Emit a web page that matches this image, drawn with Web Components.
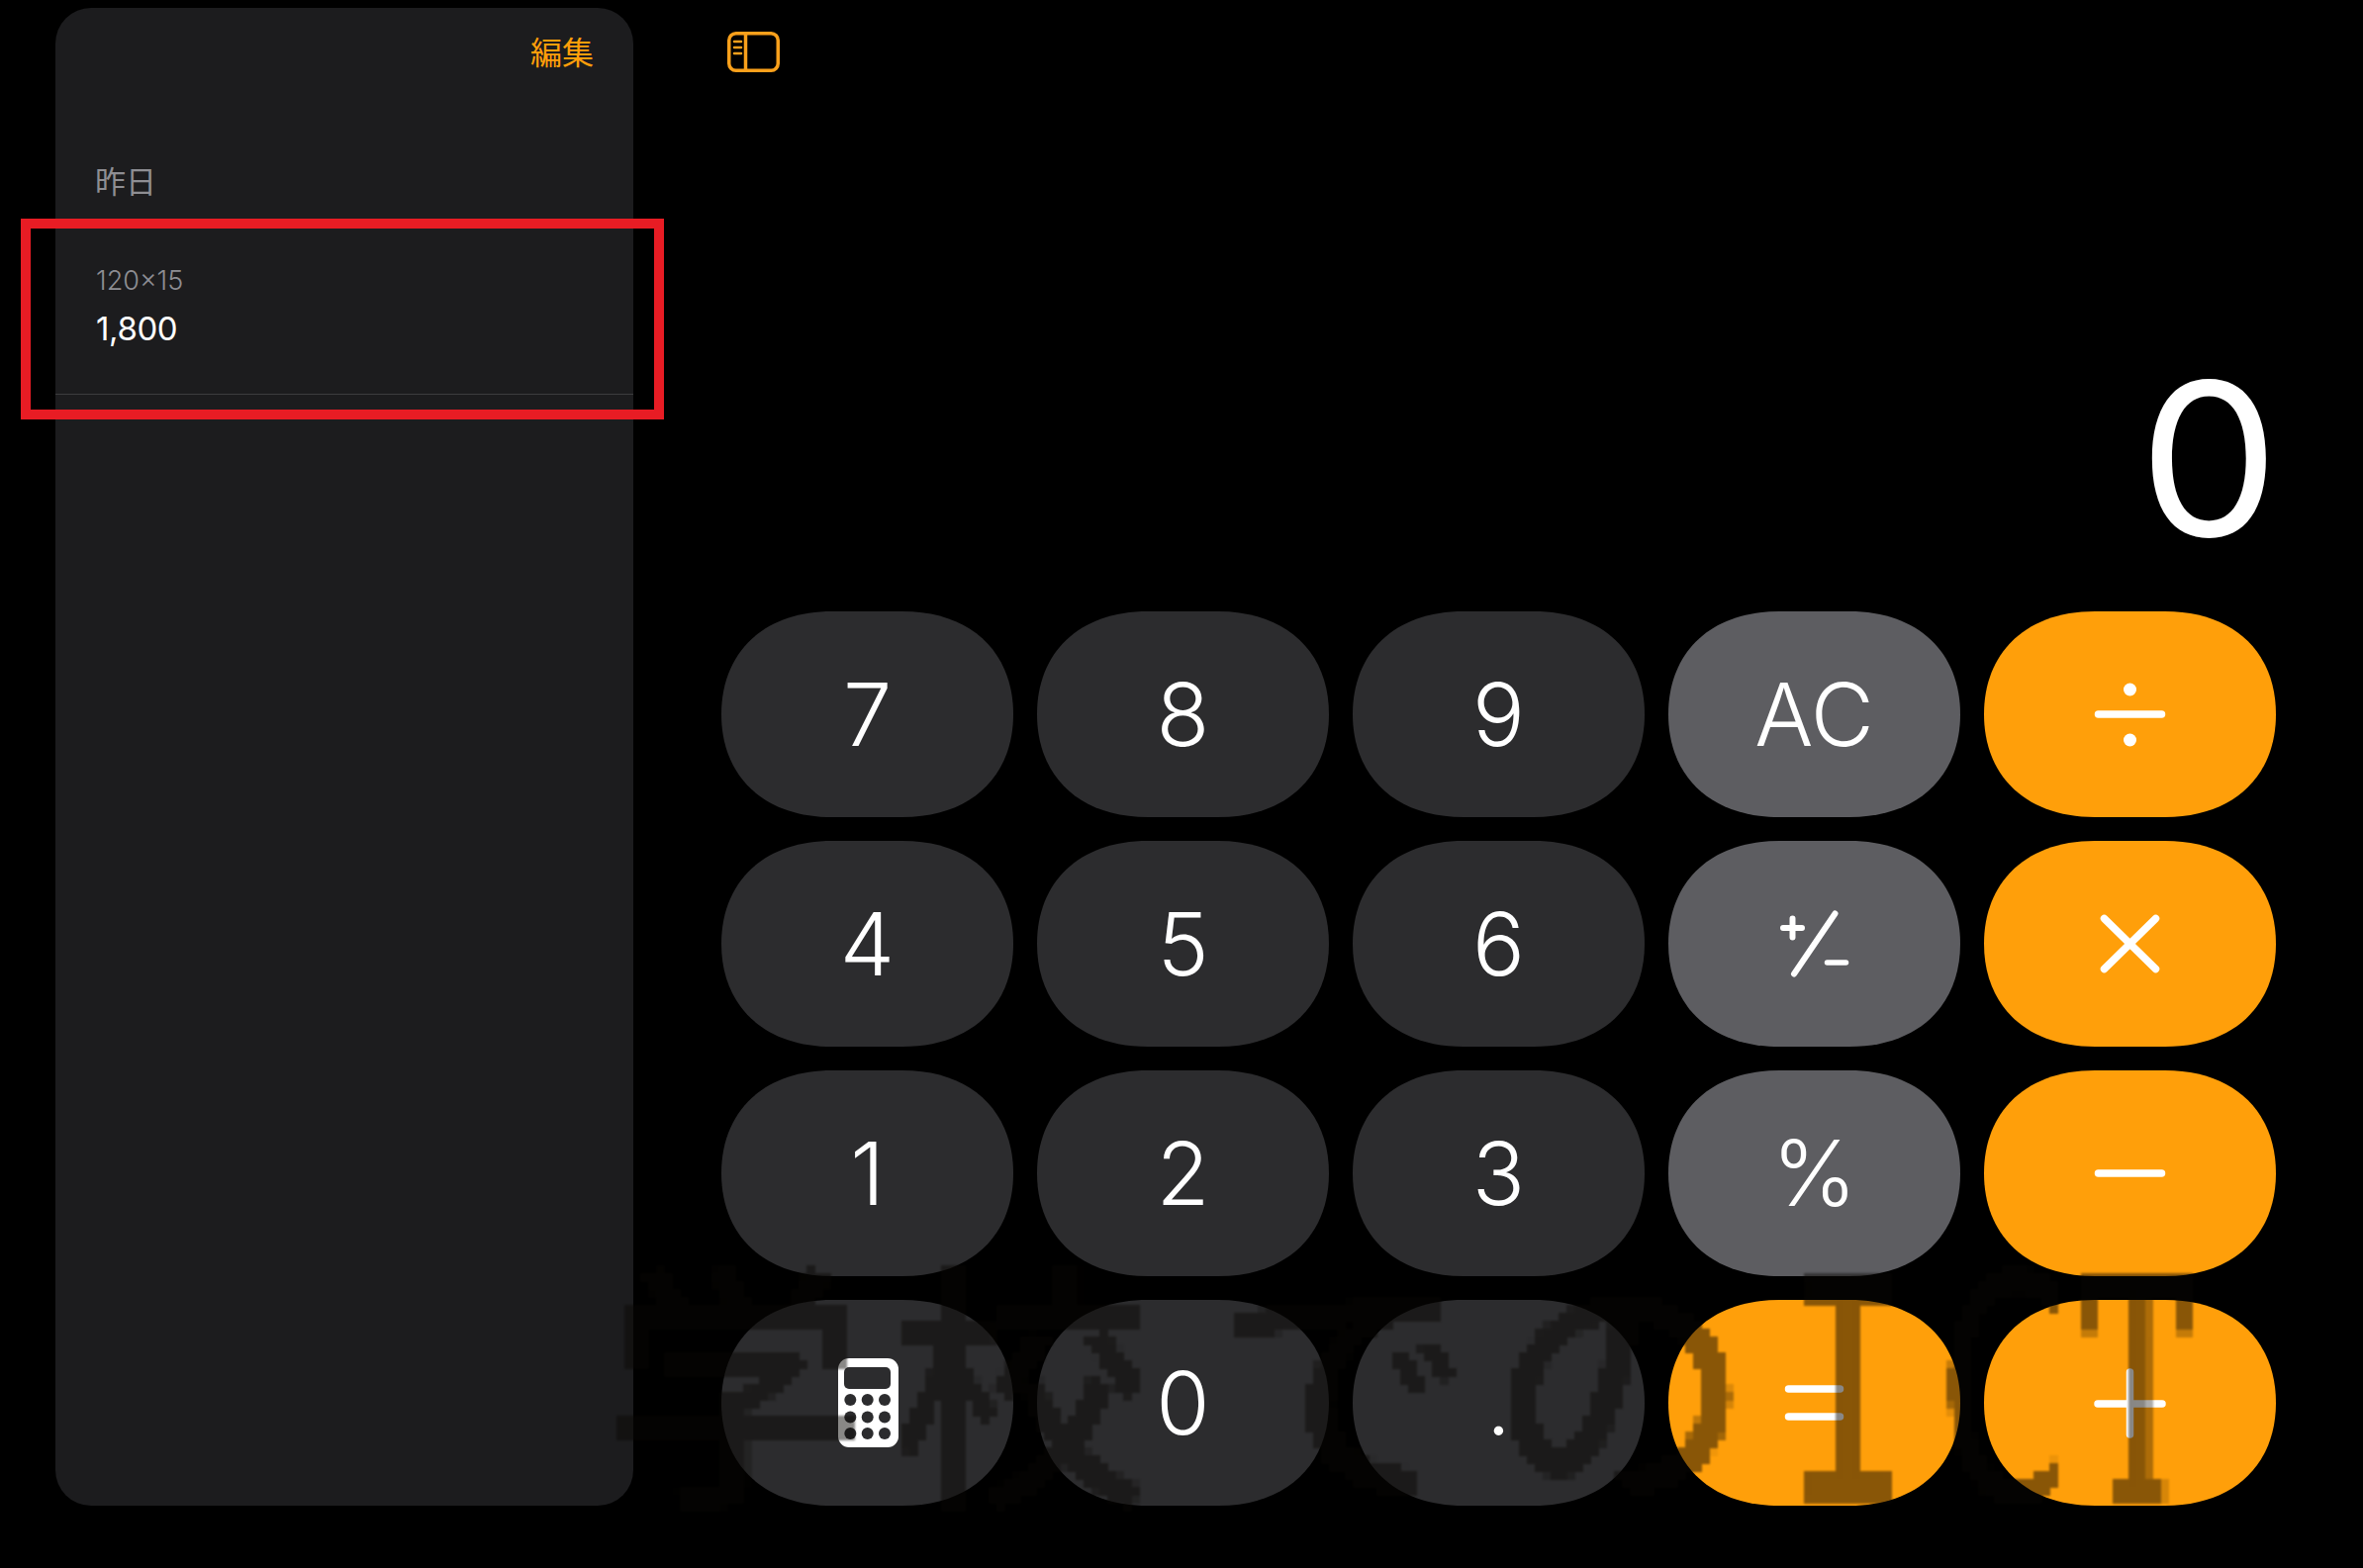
<!DOCTYPE html>
<html lang="ja">
<head>
<meta charset="utf-8">
<title>計算機</title>
<style>
  html, body { margin: 0; background: #000; }
  body { width: 2388px; height: 1585px; overflow: hidden; position: relative; }
</style>
</head>
<body>
<calc-app>
  <history-panel slot="side" edit="編集">
    <history-group label="昨日">
      <history-row expr="120×15" value="1,800"></history-row>
    </history-group>
  </history-panel>
  <sidebar-toggle slot="tool"></sidebar-toggle>
  <calc-display slot="display">0</calc-display>
  <calc-keypad slot="keys">
    <calc-key>7</calc-key><calc-key>8</calc-key><calc-key>9</calc-key>
    <calc-key kind="fn">AC</calc-key><calc-key kind="op" icon="divide"></calc-key>
    <calc-key>4</calc-key><calc-key>5</calc-key><calc-key>6</calc-key>
    <calc-key kind="fn" icon="sign"></calc-key><calc-key kind="op" icon="times"></calc-key>
    <calc-key>1</calc-key><calc-key>2</calc-key><calc-key>3</calc-key>
    <calc-key kind="fn" big>%</calc-key><calc-key kind="op" icon="minus"></calc-key>
    <calc-key icon="calc"></calc-key><calc-key>0</calc-key><calc-key>.</calc-key>
    <calc-key kind="op" icon="equals"></calc-key><calc-key kind="op" icon="plus"></calc-key>
  </calc-keypad>
</calc-app>
<ict-watermark></ict-watermark>

<script>
const appTemplate = document.createElement("template");
appTemplate.innerHTML = `
  <style>
    :host { display: flex; width: 2388px; height: 1585px; box-sizing: border-box; padding: 8px 88px 63px 56px; background: #000; }
    .main { flex: 1; display: flex; flex-direction: column; margin-left: 89px; }
    .tool { height: 75px; display: flex; align-items: flex-start; padding-top: 24px; box-sizing: border-box; }
    .display { flex: 1; display: flex; justify-content: flex-end; align-items: flex-end; }
  </style>
  <slot name="side"></slot>
  <div class="main">
    <div class="tool"><slot name="tool"></slot></div>
    <div class="display"><slot name="display"></slot></div>
    <slot name="keys"></slot>
  </div>
`;

class CalcApp extends HTMLElement {
  constructor() {
    super();
    this.attachShadow({ mode: "open" }).appendChild(appTemplate.content.cloneNode(true));
  }
}

class HistoryPanel extends HTMLElement {
  constructor() {
    super();
    this.attachShadow({ mode: "open" }).innerHTML = `
      <style>
        :host { display: block; width: 584px; height: 1514px; background: #1c1c1e; border-radius: 36px; font-family: Inter, "Noto Sans CJK JP", sans-serif; }
        .head { display: flex; justify-content: flex-end; height: 142px; box-sizing: border-box; padding: 19px 40px 0 0; }
        .edit { color: #ff9f0a; font: 400 32px/48px "Noto Sans CJK JP", sans-serif; }
      </style>
      <div class="head"><span class="edit">${this.getAttribute("edit")}</span></div>
      <slot></slot>
    `;
  }
}

class HistoryGroup extends HTMLElement {
  constructor() {
    super();
    this.attachShadow({ mode: "open" }).innerHTML = `
      <style>
        :host { display: block; }
        .label { color: #8e8e93; font: 400 31px/40px "Noto Sans CJK JP", sans-serif; padding-left: 40px; margin-top: 12px; height: 66px; }
      </style>
      <div class="label">${this.getAttribute("label")}</div>
      <slot></slot>
    `;
  }
}

class HistoryRow extends HTMLElement {
  constructor() {
    super();
    this.attachShadow({ mode: "open" }).innerHTML = `
      <style>
        :host { display: block; position: relative; height: 170px; border-bottom: 1px solid #3c3c3e; }
        .row { padding: 40px 0 0 41px; font-family: Inter, sans-serif; }
        .expr { color: #8e8e93; font-size: 27px; font-weight: 300; line-height: 32px; }
        .value { color: #fff; font-size: 33px; font-weight: 400; line-height: 40px; margin-top: 12px; letter-spacing: -0.4px; }
        /* annotation box, drawn over the row */
        .callout { position: absolute; left: -35px; right: -31px; top: -7px; height: 183px; border: 10px solid #e81c24; pointer-events: none; }
      </style>
      <div class="row">
        <div class="expr">${this.getAttribute("expr")}</div>
        <div class="value">${this.getAttribute("value")}</div>
      </div>
      <div class="callout"></div>
    `;
  }
}

class SidebarToggle extends HTMLElement {
  constructor() {
    super();
    this.attachShadow({ mode: "open" }).innerHTML = `
      <style>:host { display: block; width: 53px; height: 41px; margin-left: 6px; } svg { display: block; }</style>
      <svg width="53" height="41" viewBox="0 0 53 41" fill="none" stroke="#f9a01b" stroke-width="3.5">
        <rect x="1.75" y="1.75" width="49.5" height="37.5" rx="7"/>
        <path d="M18.5 2v37"/>
        <path d="M7 10h7M7 16h7M7 22h7" stroke-width="2.6" stroke-linecap="round"/>
      </svg>
    `;
  }
}

class CalcDisplay extends HTMLElement {
  constructor() {
    super();
    this.attachShadow({ mode: "open" }).innerHTML = `
      <style>
        :host { display: block; color: #fff; font: 400 216px/216px Inter, sans-serif; margin-bottom: 46px; margin-right: -3px; transform: scaleX(1.04); transform-origin: right; }
      </style>
      <slot></slot>
    `;
  }
}

class CalcKeypad extends HTMLElement {
  constructor() {
    super();
    this.attachShadow({ mode: "open" }).innerHTML = `
      <style>
        :host { display: grid; grid-template-columns: repeat(5, 295px); grid-auto-rows: 208px; gap: 24px; }
      </style>
      <slot></slot>
    `;
  }
}

// symbols are drawn in the 295x208 box of a key
const keyIcons = {
  divide: `<path d="M115.5 104h64"/><circle cx="147.5" cy="79" r="6.5" fill="#fff" stroke="none"/><circle cx="147.5" cy="130" r="6.5" fill="#fff" stroke="none"/>`,
  times: `<path d="M121.5 78.5l52 51M173.5 78.5l-52 51"/>`,
  minus: `<path d="M115.5 104h64"/>`,
  equals: `<path d="M121.5 90h52M121.5 118h52"/>`,
  plus: `<path d="M115 105h65M147.5 73v63"/>`,
  sign: `<path d="M116 88h19M125.5 78.5v19M127 134.5l41.5-61" stroke-width="6"/><path d="M160.5 123h19" stroke-width="5.5"/>`,
  calc: `<rect x="118" y="59" width="61" height="90" rx="11" fill="#fff" stroke="none"/>
    <rect x="124" y="68" width="47" height="22" rx="5" fill="#2c2c2e" stroke="none"/>
    <g fill="#2c2c2e" stroke="none">
      <circle cx="130.3" cy="101" r="6"/><circle cx="147.7" cy="101" r="6"/><circle cx="165" cy="101" r="6"/>
      <circle cx="130.3" cy="118.5" r="6"/><circle cx="147.7" cy="118.5" r="6"/><circle cx="165" cy="118.5" r="6"/>
      <circle cx="130.3" cy="135" r="6"/><circle cx="147.7" cy="135" r="6"/><circle cx="165" cy="135" r="6"/>
    </g>`,
};

class CalcKey extends HTMLElement {
  constructor() {
    super();
    const icon = keyIcons[this.getAttribute("icon")];
    this.attachShadow({ mode: "open" }).innerHTML = `
      <style>
        :host { display: flex; align-items: center; justify-content: center; width: 295px; height: 208px; background: #2c2c2e; color: #fff;
          font: 350 88px/1 Inter, sans-serif;
          clip-path: path("M0 104C0 42 42 0 112 0H183C253 0 295 42 295 104S253 208 183 208H112C42 208 0 166 0 104Z"); }
        :host([kind="fn"]) { background: #5d5d61; }
        :host([kind="op"]) { background: #ff9f0a; }
        :host([big]) { font-size: 92px; }
        svg { display: block; }
      </style>
      ${icon ? `<svg width="295" height="208" viewBox="0 0 295 208" fill="none" stroke="#fff" stroke-width="7.5" stroke-linecap="round">${icon}</svg>` : `<slot></slot>`}
    `;
  }
}

class IctWatermark extends HTMLElement {
  constructor() {
    super();
    this.attachShadow({ mode: "open" }).innerHTML = `
      <style>
        :host { display: block; position: absolute; left: 0; top: 0; width: 2388px; height: 1585px; pointer-events: none; }
        .layer { position: absolute; inset: 0; opacity: 0.48; filter: url(#px); color: rgb(10,8,5); }
        span { position: absolute; line-height: 1; transform-origin: 0 0; white-space: nowrap; }
        .ja { font-family: "Noto Sans CJK JP", sans-serif; font-weight: 500; font-size: 265px; top: 1255px; }
        .i { font-family: "DejaVu Sans Mono", monospace; font-size: 305px; left: 1805px; top: 1255px; transform: scaleX(0.68); -webkit-text-stroke: 7px rgb(10,8,5); }
        .c { font-family: "DejaVu Sans", sans-serif; font-size: 317px; left: 1960px; top: 1249px; transform: scaleX(0.6); }
        .t { font-family: "DejaVu Serif", serif; font-size: 305px; left: 2105px; top: 1255px; transform: scaleX(0.55); -webkit-text-stroke: 9px rgb(10,8,5); }
      </style>
      <svg width="0" height="0" style="position:absolute">
        <filter id="px" x="0" y="0" width="100%" height="100%" color-interpolation-filters="sRGB">
          <feFlood x="3" y="3" width="1" height="1"/>
          <feComposite width="8" height="8"/>
          <feTile result="grid"/>
          <feComposite in="SourceGraphic" in2="grid" operator="in"/>
          <feMorphology operator="dilate" radius="4"/>
          <feGaussianBlur stdDeviation="0.8"/>
        </filter>
      </svg>
      <div class="layer">
        <span class="ja" style="left:610px">学</span>
        <span class="ja" style="left:900px">校</span>
        <span class="ja" style="left:1225px">で</span>
        <span class="ja" style="left:1505px">の</span>
        <span class="i">I</span>
        <span class="c">C</span>
        <span class="t">T</span>
      </div>
    `;
  }
}

customElements.define("calc-app", CalcApp);
customElements.define("history-panel", HistoryPanel);
customElements.define("history-group", HistoryGroup);
customElements.define("history-row", HistoryRow);
customElements.define("sidebar-toggle", SidebarToggle);
customElements.define("calc-display", CalcDisplay);
customElements.define("calc-keypad", CalcKeypad);
customElements.define("calc-key", CalcKey);
customElements.define("ict-watermark", IctWatermark);
</script>
</body>
</html>
